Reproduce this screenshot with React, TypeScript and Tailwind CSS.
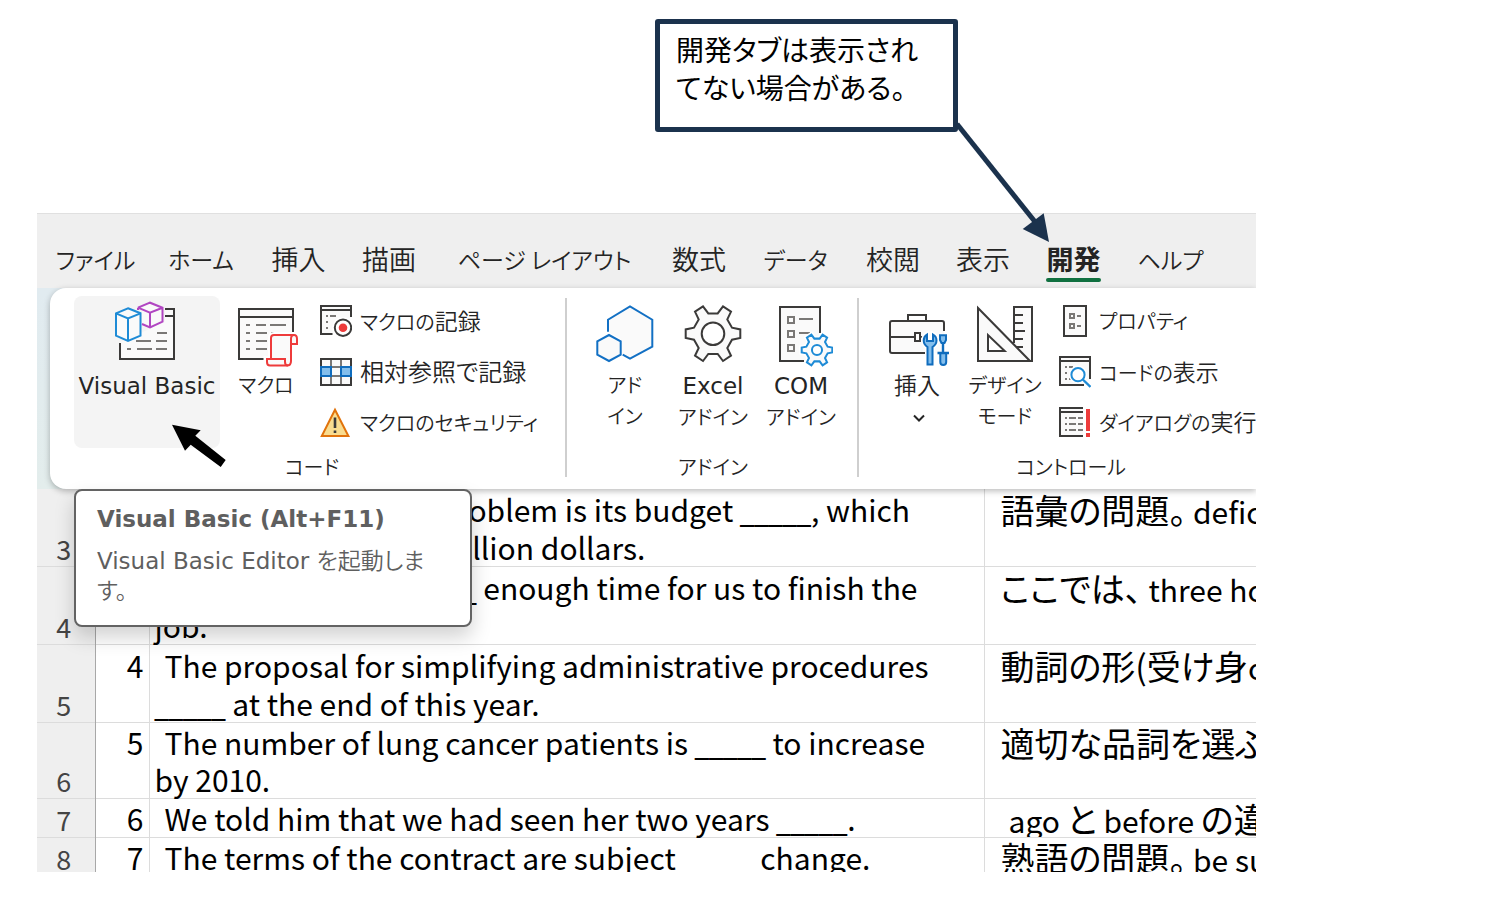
import type { ReactNode } from "react";

const UI = "font-['DejaVu_Sans','Noto_Sans_CJK_JP',sans-serif] [font-feature-settings:'palt']";
const JP = "font-['Noto_Sans_CJK_JP',sans-serif] [font-feature-settings:'palt']";

const DARK = "#3b3a39";
const GREY = "#7a7876";
const PAPER = "#fafafa";

function Large({ children }: { children: ReactNode }) {
  return (
    <svg width="64" height="66" viewBox="0 0 64 66" fill="none" strokeWidth="2" aria-hidden="true" className="shrink-0">
      {children}
    </svg>
  );
}

function Small({ children }: { children: ReactNode }) {
  return (
    <svg width="32" height="32" viewBox="0 0 32 32" fill="none" strokeWidth="2" aria-hidden="true" className="shrink-0">
      {children}
    </svg>
  );
}

const GEAR =
  "M-27.3-4.3V4.3L-19 6L-14.3 14.3L-18 22L-10 27.3L-4.7 20.3H4.7L10 27.3L18 22L14.3 14.3L19 6L27.3 4.3V-4.3L19-6L14.3-14.3L18-22L10-27.3L4.7-20.3H-4.7L-10-27.3L-18-22L-14.3-14.3L-19-6Z";

const VisualBasicIcon = () => (
  <Large>
    <path d="M50 8H59V58H5V41L30 30L50 20Z" fill={PAPER} />
    <path d="M50 8H59V58H5V42M50 15H59" stroke={DARK} />
    <path d="M42 32H52M21 40H36M41 40H52M12 48H16M22 48H37M41 48H52" stroke={GREY} />
    <path d="M27 10V7L35 1.7L47.5 6.7V20.7L35 26.3L27 23" fill={PAPER} />
    <path d="M23 6.7L35 1.7L47.5 6.7V20.7L35 26.3L27 23M23 6.7L35 11.7L47.5 6.7M35 11.7V26.3M23 6.7V9" stroke="#b146c2" />
    <path d="M13 7.3L25.5 12.3V34.7L13 40L1 34.7V12.3Z" fill={PAPER} stroke="#1e8bd6" />
    <path d="M1 12.3L13 17.5L25.5 12.3M13 17.5V40" stroke="#1e8bd6" />
  </Large>
);

const MacroIcon = () => (
  <Large>
    <path d="M5 8H59V58H5Z" fill={PAPER} />
    <path d="M59 32V8H5V58H31M5 16H59" stroke={DARK} />
    <path d="M12 24H16M22 24H32M36 24H52M12 32H16M22 32H33M37 32H52M12 40H16M22 40H33M12 48H16M22 48H33" stroke={GREY} />
    <path d="M37 58V37Q37 34 40 34H60Q63.2 34 63.2 38V43H57V60Q57 64.5 53 64.5H36Q32.5 64.5 32.5 61V58Z" fill={PAPER} stroke="#fff" strokeWidth="6" />
    <path d="M37 58V37Q37 34 40 34H60Q63 34 63 38V43H57V60Q57 64.5 53 64.5H36Q33 64.5 33 61V58Z" fill={PAPER} stroke="#ee3b3b" />
    <path d="M57 43V38Q57 34 60 34M37 58H51V61Q51 64.5 54 64.5" stroke="#ee3b3b" />
  </Large>
);

const AddinIcon = () => (
  <Large>
    <path d="M15 30.7V18.7L37 5.5L59.3 18.7V45.7L37 57.7L29.7 53.7L28 38Z" fill={PAPER} />
    <path d="M15 30.7V18.7L37 5.5L59.3 18.7V45.7L37 57.7L29.7 53.7" stroke="#1270c4" />
    <path d="M16 34L27.7 40.3V53.7L16 60L4.3 53.7V40.3Z" fill={PAPER} stroke="#1270c4" />
  </Large>
);

const GearIcon = () => (
  <Large>
    <g transform="translate(32 32.7)" stroke={DARK}>
      <path d={GEAR} fill={PAPER} />
      <circle r="11.3" fill="#fff" />
    </g>
  </Large>
);

const ComIcon = () => (
  <Large>
    <path d="M11 6H51V60H11Z" fill={PAPER} />
    <path d="M51 32V6H11V60H35" stroke={DARK} />
    <path d="M19 16H25V22H19ZM19 30H25V36H19ZM19 44H25V50H19ZM30 18H44M30 32H41" stroke={GREY} />
    <g transform="translate(48 49) scale(.56)">
      <path d={GEAR} fill="#fff" stroke="#fff" strokeWidth="9" />
      <path d={GEAR} fill={PAPER} stroke="#1e8bd6" strokeWidth="3.6" />
      <circle r="9" fill="#fff" stroke="#1e8bd6" strokeWidth="3.6" />
    </g>
  </Large>
);

const ToolboxIcon = () => (
  <Large>
    <path d="M6 20H58L59 22V52H5V22Z" fill={PAPER} />
    <path d="M59 30V22Q59 20 57 20H7Q5 20 5 22V50Q5 52 7 52H40M23 20V14H41V20M5 36H29M35 36H39" stroke={DARK} />
    <path d="M30 32H35V40H30Z" fill="#fff" stroke={DARK} />
    <path d="M42 33.5Q38.7 35.5 38.7 39.5Q38.7 43.5 42.5 46V63.5H47.5V46Q51.5 43.5 51.5 39.5Q51.5 35.5 48 33.5V40H42Z" fill="#83beec" stroke="#fff" strokeWidth="5" />
    <path d="M42 33.5Q38.7 35.5 38.7 39.5Q38.7 43.5 42.5 46V63.5H47.5V46Q51.5 43.5 51.5 39.5Q51.5 35.5 48 33.5V40H42Z" fill="#83beec" stroke="#0f6cbd" />
    <path d="M55 34.3H61V39L59.5 42H56.5L55 39ZM55.3 52V61Q55.3 64 58.2 64Q61.2 64 61.2 61V52Z" fill="#83beec" stroke="#0f6cbd" />
    <path d="M58 42V52M52.5 52H64" stroke="#0f6cbd" strokeWidth="2.4" />
  </Large>
);

const DesignIcon = () => (
  <Large>
    <path d="M41 42V6H59V60H57ZM5 7V60H57Z" fill={PAPER} />
    <path d="M41 42V6H59V60H5V7L57 60M41 14H50M41 22H50M41 30H52M41 38H50M44 46H50" stroke={DARK} />
    <path d="M15 34V50H31.7Z" fill="#fff" stroke={DARK} />
  </Large>
);

const RecordIcon = () => (
  <Small>
    <path d="M31 12V1H1V29H12.5M1 5H31" stroke={DARK} fill={PAPER} />
    <path d="M6 11H8M10 11H16M6 17H8M6 23H8" stroke={GREY} />
    <circle cx="23" cy="22.7" r="8.2" fill="#fff" stroke="#fff" strokeWidth="5" />
    <circle cx="23" cy="22.7" r="8.2" fill="#fff" stroke={DARK} />
    <circle cx="23" cy="22.7" r="4.3" fill="#ee3b3b" />
  </Small>
);

const RelativeIcon = () => (
  <Small>
    <path d="M1 3H31V29H1Z" fill={PAPER} />
    <path d="M11 4V28M21 4V28" stroke={GREY} />
    <path d="M1 3H31V29H1Z" stroke={DARK} />
    <path d="M11 11H21M11 20H21" stroke={GREY} />
    <path d="M1 11H11V20H1ZM21 11H31V20H21Z" fill="#83beec" stroke="#0f6cbd" />
  </Small>
);

const WarningIcon = () => (
  <Small>
    <path d="M15 2.8L28.4 29H1.8Z" fill="#f9dc8f" stroke="#e1730c" />
    <path d="M15 10.5V21M15 23.5V26" stroke={DARK} strokeWidth="2.6" />
  </Small>
);

const PropertiesIcon = () => (
  <Small>
    <path d="M5 1H27V31H5Z" fill={PAPER} stroke={DARK} />
    <path d="M11 9H15V13H11ZM11 19H15V23H11ZM18 11H22M18 21H22" stroke={GREY} />
  </Small>
);

const CodeIcon = () => (
  <Small>
    <path d="M31 23V1H1V29H25M1 5H31" stroke={DARK} fill={PAPER} />
    <path d="M6 11H8M10 11H14M6 17H8M6 23H8M10 23H12" stroke={GREY} />
    <circle cx="19" cy="18.7" r="6.6" fill="#fff" stroke="#fff" strokeWidth="5" />
    <circle cx="19" cy="18.7" r="6.6" fill="#fff" stroke="#1e8bd6" />
    <path d="M23.8 23.5L31.5 31" stroke="#1e8bd6" strokeWidth="2.4" />
  </Small>
);

const DialogIcon = () => (
  <Small>
    <path d="M24 1H1V29H24M1 5H24" stroke={DARK} fill={PAPER} />
    <path d="M6 11H8M10 11H17M19 11H24M6 17H8M10 17H17M19 17H24M6 23H8M10 23H17M19 23H24" stroke={GREY} />
    <path d="M29 2V24M29 26V30" stroke="#ee3b3b" strokeWidth="4" />
  </Small>
);

const tabs = [
  { label: "ファイル", style: "w-[99px] text-[23px] font-[350]" },
  { label: "ホーム", style: "w-[112px] text-[23px] font-[350]" },
  { label: "挿入", style: "w-[83px] text-[27px] font-[350]" },
  { label: "描画", style: "w-[98px] text-[27px] font-[350]" },
  { label: "ページ レイアウト", style: "w-[213px] text-[23px] font-[350]" },
  { label: "数式", style: "w-[96px] text-[27px] font-[350]" },
  { label: "データ", style: "w-[97px] text-[23px] font-[350]" },
  { label: "校閲", style: "w-[98px] text-[27px] font-[350]" },
  { label: "表示", style: "w-[82px] text-[27px] font-[350]" },
  { label: "開発", style: "w-[99px] text-[27px] font-bold", active: true },
  { label: "ヘルプ", style: "w-[95px] text-[23px] font-[350]" },
];

function BigButton({ icon, lines, className, chevron }: { icon: ReactNode; lines: ReactNode[]; className: string; chevron?: boolean }) {
  return (
    <button type="button" className={`flex h-[152px] shrink-0 flex-col items-center rounded-lg pt-[5px] ${className}`}>
      {icon}
      <span className="mt-1 flex flex-col items-center text-[20px] leading-[31px] whitespace-nowrap font-[350]">
        {lines.map((line, index) => (
          <span key={index}>{line}</span>
        ))}
      </span>
      {chevron && (
        <svg width="12" height="31" viewBox="0 0 12 31" fill="none" stroke="#242424" strokeWidth="2" aria-hidden="true" className="ml-1">
          <path d="M1 12.5L6 17.5L11 12.5" />
        </svg>
      )}
    </button>
  );
}

const Latin = ({ children }: { children: ReactNode }) => <span className="text-[23px] font-normal">{children}</span>;
const Kanji = ({ children }: { children: ReactNode }) => <span className="text-[23px]">{children}</span>;

function SmallButton({ icon, children }: { icon: ReactNode; children: ReactNode }) {
  return (
    <button type="button" className="flex h-13 items-center gap-2 text-[20px] whitespace-nowrap font-[350]">
      {icon}
      <span className="pt-[2px]">{children}</span>
    </button>
  );
}

function Group({ label, className, children }: { label: string; className: string; children: ReactNode }) {
  return (
    <section aria-label={label} className={`flex shrink-0 flex-col ${className}`}>
      <div className="flex h-[152px]">{children}</div>
      <div className="text-center text-[20px] leading-[40px] font-[350]">{label}</div>
    </section>
  );
}

const Separator = ({ className }: { className: string }) => <div className={`mt-[2px] h-[179px] w-[2px] shrink-0 bg-[#cfcfcf] ${className}`} />;

const Blank = () => <span className="font-['Noto_Sans'] text-[32px] leading-none">_____</span>;
const Jp = ({ children }: { children: ReactNode }) => <span className="text-[34px] leading-none">{children}</span>;

interface Row {
  head: string;
  no: string;
  height: string;
  leading: string;
  text: ReactNode;
  note: ReactNode;
}

const rows: Row[] = [
  {
    head: "3",
    no: "",
    height: "h-[77px]",
    leading: "leading-[38px]",
    text: (
      <>
        <div className="pl-[284px]">problem is its budget <Blank />, which</div>
        <div className="pl-[291px]">billion dollars.</div>
      </>
    ),
    note: <><Jp>語彙の問題。</Jp> deficit</>,
  },
  {
    head: "4",
    no: "",
    height: "h-[77px]",
    leading: "leading-[38px]",
    text: (
      <>
        <div className="pl-[251px]"><Blank /> enough time for us to finish the</div>
        <div>job.</div>
      </>
    ),
    note: <><Jp>ここでは、</Jp> three hours</>,
  },
  {
    head: "5",
    no: "4",
    height: "h-[77px]",
    leading: "leading-[38px]",
    text: (
      <>
        <div className="pl-[10px]">The proposal for simplifying administrative procedures</div>
        <div><Blank /> at the end of this year.</div>
      </>
    ),
    note: <><Jp>動詞の形(受け身</Jp>or</>,
  },
  {
    head: "6",
    no: "5",
    height: "h-[75px]",
    leading: "leading-[37px]",
    text: (
      <>
        <div className="pl-[10px]">The number of lung cancer patients is <Blank /> to increase</div>
        <div>by 2010.</div>
      </>
    ),
    note: <Jp>適切な品詞を選ぶ</Jp>,
  },
  {
    head: "7",
    no: "6",
    height: "h-[38px]",
    leading: "leading-[37px]",
    text: <div className="pl-[10px]">We told him that we had seen her two years <Blank />.</div>,
    note: <span className="pl-2">ago <Jp>と</Jp> before <Jp>の違い</Jp></span>,
  },
  {
    head: "8",
    no: "7",
    height: "h-[38px]",
    leading: "leading-[37px]",
    text: <div className="pl-[10px]">The terms of the contract are subject <Blank /> change.</div>,
    note: <><Jp>熟語の問題。</Jp> be subject</>,
  },
];

export default function App() {
  return (
    <main className={`relative overflow-hidden bg-white pt-[19px] pb-9 pl-[37px] text-[#242424] ${UI}`}>
      <p className={`ml-[618px] h-[113px] w-[303px] rounded-[3px] border-5 border-[#1b324d] pt-[6px] pl-4 text-[28px] leading-[38px] whitespace-nowrap text-black ${JP}`}>
        開発タブは表示され
        <br />
        てない場合がある。
      </p>

      <div className="relative mt-[81px] mr-[232px] overflow-hidden">
        <nav aria-label="リボン タブ" className="flex h-[75px] items-end border-t border-[#e0e0e0] bg-[#efefef] pl-[9px]">
          {tabs.map((tab) => (
            <button key={tab.label} type="button" className={`relative h-14 shrink-0 pb-[2px] whitespace-nowrap ${tab.style} ${JP}`}>
              {tab.label}
              {tab.active && <span className="absolute inset-x-[22px] bottom-[6px] h-1 rounded-full bg-[#107040]" />}
            </button>
          ))}
        </nav>

        <div className="bg-linear-to-b from-[#e1ebf0] to-[#e3edec] pl-[13px]">
          <div className="relative z-10 flex h-[201px] rounded-l-2xl bg-white pt-2 pl-6 shadow-[0_2px_6px_rgba(0,0,0,0.28)]">
            <Group label="コード" className="w-[476px]">
              <BigButton icon={<VisualBasicIcon />} lines={[<Latin>Visual Basic</Latin>]} className="w-[146px] bg-[#f4f4f4]" />
              <BigButton icon={<MacroIcon />} lines={["マクロ"]} className="ml-[14px] w-16" />
              <div className="ml-[22px] flex flex-col">
                <SmallButton icon={<RecordIcon />}>マクロの<Kanji>記録</Kanji></SmallButton>
                <SmallButton icon={<RelativeIcon />}><span className="text-[24px]">相対参照で記録</span></SmallButton>
                <SmallButton icon={<WarningIcon />}>マクロのセキュリティ</SmallButton>
              </div>
            </Group>
            <Separator className="ml-[15px]" />
            <Group label="アドイン" className="ml-[14px] w-[264px]">
              <BigButton icon={<AddinIcon />} lines={["アド", "イン"]} className="w-[88px]" />
              <BigButton icon={<GearIcon />} lines={[<Latin>Excel</Latin>, "アドイン"]} className="w-[88px]" />
              <BigButton icon={<ComIcon />} lines={[<Latin>COM</Latin>, "アドイン"]} className="w-[88px]" />
            </Group>
            <Separator className="ml-3" />
            <Group label="コントロール" className="ml-[14px] w-[396px]">
              <BigButton icon={<ToolboxIcon />} lines={[<Kanji>挿入</Kanji>]} className="w-[88px]" chevron />
              <BigButton icon={<DesignIcon />} lines={["デザイン", "モード"]} className="w-[88px]" />
              <div className="ml-[10px] flex flex-col">
                <SmallButton icon={<PropertiesIcon />}>プロパティ</SmallButton>
                <SmallButton icon={<CodeIcon />}>コードの<Kanji>表示</Kanji></SmallButton>
                <SmallButton icon={<DialogIcon />}>ダイアログの<Kanji>実行</Kanji></SmallButton>
              </div>
            </Group>
          </div>
        </div>

        <div className="relative h-[383px] overflow-hidden">
          <table className={`w-full table-fixed border-collapse text-[30px] text-black ${JP}`}>
            <colgroup>
              <col className="w-[58px]" />
              <col className="w-[54px]" />
              <col className="w-[835px]" />
              <col />
            </colgroup>
            <tbody>
              {rows.map((row) => (
                <tr key={row.head} className={`border-b border-[#dcdcdc] ${row.height} ${row.leading}`}>
                  <th scope="row" className="border-r border-[#a8a8a8] bg-[#efefef] p-0 pr-1 align-bottom text-[27px] leading-[35px] font-normal text-[#444]">
                    {row.head}
                  </th>
                  <td className="border-r border-[#dcdcdc] p-0 pt-px pr-[5px] text-right align-top">{row.no}</td>
                  <td className="border-r border-[#dcdcdc] p-0 pt-px pl-[5px] align-top whitespace-nowrap">{row.text}</td>
                  <td className="overflow-hidden p-0 pt-[3px] pl-4 align-top whitespace-nowrap">
                    <div className="h-[35px]">{row.note}</div>
                  </td>
                </tr>
              ))}
            </tbody>
          </table>
        </div>

        <div role="tooltip" className="absolute top-[276px] left-[37px] z-20 h-[138px] w-[398px] rounded-lg border-2 border-[#636363] bg-white px-[21px] pt-[13px] text-[23px] leading-[30px] text-[#5f5f5f] shadow-[0_10px_20px_rgba(0,0,0,0.18)]">
          <strong className="block font-bold whitespace-nowrap">Visual Basic (Alt+F11)</strong>
          <p className="mt-3">
            Visual Basic Editor <span className="font-[350]">を起動しま<br />す。</span>
          </p>
        </div>

        <svg width="56" height="44" viewBox="0 0 56 44" aria-hidden="true" className="absolute top-[211px] left-[135px] z-20">
          <path d="M0 .7L28.7 6.3L23.3 11.7L53.7 36L48.7 43L18.7 20.7L13 26.7Z" fill="#000" />
        </svg>
      </div>

      <svg width="100" height="125" viewBox="0 0 100 125" aria-hidden="true" className="absolute top-[120px] left-[953px] z-30">
        <path d="M4 4L83 103" stroke="#1b324d" strokeWidth="5" />
        <path d="M69.7 109L90.7 93.3L96 122Z" fill="#1b324d" />
      </svg>
    </main>
  );
}
